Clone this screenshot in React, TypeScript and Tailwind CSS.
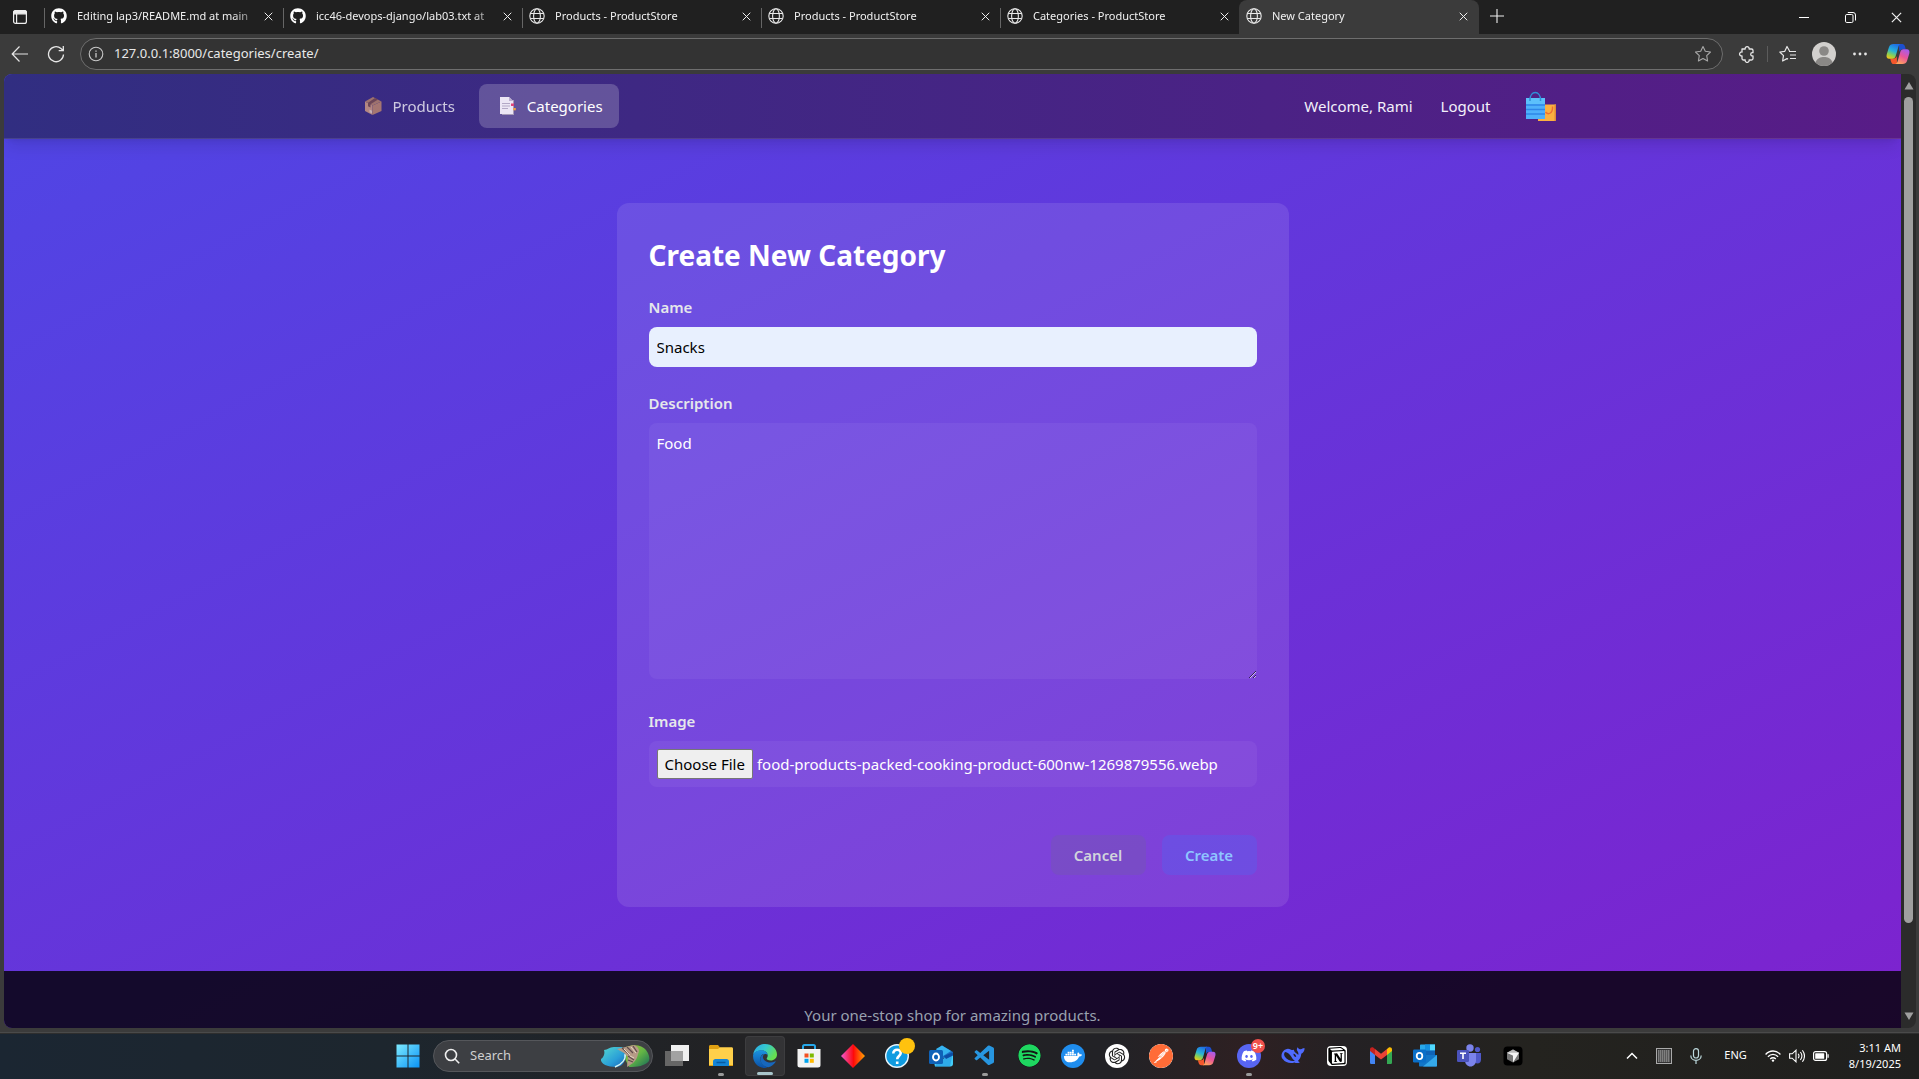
import { useEffect, useRef, type ReactNode } from "react";
import { FaDiscord, FaDocker, FaGithub, FaSpotify } from "react-icons/fa";
import { RiOpenaiFill } from "react-icons/ri";
import { SiNotion, SiPostman } from "react-icons/si";
import { VscVscode } from "react-icons/vsc";

const Globe = () => (
  <svg viewBox="0 0 16 16" className="size-4" fill="none" stroke="#e8e8e8" strokeWidth="1.1">
    <circle cx="8" cy="8" r="7.2" />
    <ellipse cx="8" cy="8" rx="3.4" ry="7.2" />
    <path d="M1.4 5.5h13.2M1.4 10.5h13.2" />
  </svg>
);

const Cross = ({ className }: { className: string }) => (
  <svg viewBox="0 0 10 10" className={className} fill="none" stroke="currentColor" strokeWidth="1.1">
    <path d="M.8.8l8.4 8.4M9.2.8L.8 9.2" />
  </svg>
);

const Copilot = ({ id, className }: { id: string; className: string }) => (
  <svg viewBox="0 0 24 24" className={className}>
    <defs>
      <linearGradient id={id + "a"} x1="0.6" y1="0" x2="0.2" y2="1">
        <stop offset="0" stopColor="#1f6fe5" />
        <stop offset="0.45" stopColor="#27b3d8" />
        <stop offset="0.75" stopColor="#8fd14f" />
        <stop offset="1" stopColor="#f5c518" />
      </linearGradient>
      <linearGradient id={id + "b"} x1="0.8" y1="0" x2="0.3" y2="1">
        <stop offset="0" stopColor="#a45cf0" />
        <stop offset="0.5" stopColor="#e9549a" />
        <stop offset="1" stopColor="#ffa45c" />
      </linearGradient>
    </defs>
    <path d="M13 2h3.2c1.5 0 2.3 1 2.8 2.6l.8 2.9h-3.6c-1.7 0-2.5.9-3 2.5L13 2z" fill="#1c4fd0" />
    <path d="M11 22H7.8c-1.500 0-2.300-1-2.800-2.600L4.200 16.500h3.600c1.700 0 2.500-.9 3-2.500L11 22z" fill="#f4572c" />
    <path d="M7.500 2h7.200c-1.300.3-1.900 1.300-2.300 2.700L9.700 14c-.5 1.700-1.500 2.700-3.200 2.700H3.200C1 16.700 0 14.900.7 12.400L3 4.900C3.600 3 5.200 2 7.500 2z" fill={"url(#" + id + "a)"} />
    <path d="M16.500 22H9.300c1.300-.3 1.900-1.300 2.300-2.700L14.300 10c.5-1.700 1.500-2.700 3.200-2.700h3.300c2.200 0 3.200 1.800 2.500 4.300L21 19.100c-.6 1.900-2.200 2.900-4.500 2.900z" fill={"url(#" + id + "b)"} />
  </svg>
);

const GithubMark = () => <FaGithub className="size-4 text-white" />;

type Tab = { title: string; icon: ReactNode; active?: boolean };
const tabs: Tab[] = [
  { title: "Editing lap3/README.md at main", icon: <GithubMark /> },
  { title: "icc46-devops-django/lab03.txt at", icon: <GithubMark /> },
  { title: "Products - ProductStore", icon: <Globe /> },
  { title: "Products - ProductStore", icon: <Globe /> },
  { title: "Categories - ProductStore", icon: <Globe /> },
  { title: "New Category", icon: <Globe />, active: true },
];

function TabStrip() {
  return (
    <div className="flex h-[34px] shrink-0 items-stretch bg-[#202020] text-[#f0f0f0]">
      <button aria-label="Tab actions" className="flex w-11 shrink-0 items-center pl-3">
        <svg viewBox="0 0 16 16" className="size-4" fill="none" stroke="#eee" strokeWidth="1.200">
          <rect x="1.600" y="1.600" width="12.800" height="12.800" rx="2" />
          <path d="M1.600 3.600a2 2 0 0 1 2-2h8.800a2 2 0 0 1 2 2v1.200H1.600z" fill="#eee" />
          <path d="M4.600 5v9" />
        </svg>
      </button>
      {tabs.map((tab, i) => (
        <div
          key={i}
          className={
            tab.active
              ? "relative flex w-60 shrink items-center gap-2.5 rounded-t-lg bg-[#3b3b3b] pr-1.5 pb-0.5 pl-[7px]"
              : "relative flex w-[239px] shrink items-center gap-2.5 pr-[5px] pb-0.5 pl-[7px] before:absolute before:top-2 before:left-0 before:h-5 before:w-px before:bg-[#666]"
          }
        >
          <span className="shrink-0">{tab.icon}</span>
          <span className="min-w-0 flex-1 overflow-hidden text-[11px] whitespace-nowrap [mask-image:linear-gradient(to_right,#000_88%,rgb(0_0_0/0.3))]">
            {tab.title}
          </span>
          <button aria-label="Close tab" className="-ml-1.5 flex size-5 shrink-0 items-center justify-center">
            <Cross className="size-[9px]" />
          </button>
        </div>
      ))}
      <button aria-label="New tab" className="flex w-[35px] items-center justify-center pb-0.5">
        <svg viewBox="0 0 14 14" className="size-3.5" stroke="#eee" strokeWidth="1.100">
          <path d="M7 0v14M0 7h14" />
        </svg>
      </button>
      <div className="ml-auto flex">
        <button aria-label="Minimize" className="flex w-[46px] items-center justify-center">
          <svg viewBox="0 0 10 10" className="size-2.5" stroke="#fff"><path d="M0 5.500h10" /></svg>
        </button>
        <button aria-label="Restore" className="flex w-[46px] items-center justify-center">
          <svg viewBox="0 0 11 11" className="size-[11px]" fill="none" stroke="#fff">
            <rect x=".5" y="2.500" width="7.500" height="8" rx="1.300" />
            <path d="M2.800.5h5.200a2.500 2.500 0 0 1 2.500 2.500v5.500" />
          </svg>
        </button>
        <button aria-label="Close" className="flex w-[46px] items-center justify-center">
          <Cross className="size-[11px]" />
        </button>
      </div>
    </div>
  );
}

function Toolbar() {
  return (
    <div className="flex h-10 shrink-0 items-center bg-[#3b3b3b] text-[#e6e6e6]">
      <button aria-label="Back" className="flex w-10 items-center justify-center">
        <svg viewBox="0 0 18 18" className="size-[18px]" fill="none" stroke="currentColor" strokeWidth="1.200">
          <path d="M17 9H1.500M8.500 1.500L1.200 9l7.300 7.500" />
        </svg>
      </button>
      <button aria-label="Refresh" className="flex w-8 items-center justify-center">
        <svg viewBox="0 0 18 18" className="size-[18px]" fill="none" stroke="currentColor" strokeWidth="1.300">
          <path d="M16.500 9.500A7.500 7.500 0 1 1 14 3.600l2 1.900M16.300 1v4.700h-4.600" />
        </svg>
      </button>
      <div className="ml-2 flex h-8 flex-1 items-center rounded-full border border-[#6e6e6e] bg-[#333] pr-2.5 pl-[7px]">
        <svg viewBox="0 0 16 16" className="size-4 shrink-0" fill="none" stroke="#c8c8c8" strokeWidth="1.100">
          <circle cx="8" cy="8" r="6.800" />
          <path d="M8 7v4.500M8 4.500v1.300" strokeWidth="1.300" />
        </svg>
        <input
          aria-label="Address"
          defaultValue="127.0.0.1:8000/categories/create/"
          className="ml-2.5 min-w-0 flex-1 bg-transparent text-[13px] text-[#e8e8e8] outline-none"
        />
        <svg viewBox="0 0 18 18" className="size-[18px] shrink-0" fill="none" stroke="#a8a8a8" strokeWidth="1.100" strokeLinejoin="round">
          <path d="M9 1.500l2.300 4.800 5.200.7-3.800 3.700.9 5.300L9 13.500 4.400 16l.9-5.300L1.500 7l5.200-.7z" />
        </svg>
      </div>
      <button aria-label="Extensions" className="ml-3.5 flex w-5 items-center justify-center">
        <svg viewBox="0 0 18 18" className="size-[18px]" fill="none" stroke="currentColor" strokeWidth="1.300" strokeLinejoin="round">
          <path d="M4 4h3.200a2 2 0 1 1 3.900 0h2.400a1.500 1.500 0 0 1 1.500 1.500v2.200h-.7a1.600 1.600 0 0 0 0 3.200h.7v2.600a1.500 1.500 0 0 1-1.500 1.500h-2.400a2 2 0 1 1-3.900 0H5.500A1.500 1.500 0 0 1 4 13.500v-2.600a2 2 0 1 1 0-3.900z" />
        </svg>
      </button>
      <span className="mx-2.5 h-4 w-px bg-[#5c5c5c]" />
      <button aria-label="Favorites" className="flex w-5 items-center justify-center">
        <svg viewBox="0 0 18 18" className="size-[18px]" fill="none" stroke="currentColor" strokeWidth="1.200" strokeLinejoin="round">
          <path d="M10.500 6L8 1.500 5.800 6.300.8 7l3.700 3.700-.9 5.300L8 13.600l1 .5M10 6.500h7M11 10h6M11 13.500h6" />
        </svg>
      </button>
      <button aria-label="Profile" className="ml-3.5 size-6 overflow-hidden rounded-full">
        <svg viewBox="0 0 24 24">
          <rect width="24" height="24" fill="#d2d0ce" />
          <circle cx="12" cy="9" r="4.800" fill="#8a8886" />
          <path d="M3.500 20c2-4 5-5 8.500-5s6.500 1 8.500 5v4h-17z" fill="#8a8886" />
        </svg>
      </button>
      <button aria-label="Settings and more" className="ml-1 flex w-10 items-center justify-center">
        <svg viewBox="0 0 14 4" className="h-1 w-3.5" fill="currentColor">
          <circle cx="1.500" cy="2" r="1.400" /><circle cx="7" cy="2" r="1.400" /><circle cx="12.500" cy="2" r="1.400" />
        </svg>
      </button>
      <button aria-label="Copilot" className="mr-[9px] ml-1.5">
        <Copilot id="tb" className="size-6" />
      </button>
    </div>
  );
}

const PackageIcon = () => (
  <svg viewBox="0 0 24 24" className="size-6">
    <path d="M4 7.500l7.500 4V21L4 17z" fill="#dda582" />
    <path d="M11.500 11.500l9-4v9.500l-9 4z" fill="#c98f6c" />
    <path d="M4 7.500L12 3l8.500 4.500-9 4z" fill="#c08a68" />
    <path d="M14 4l3 1.600-7.500 4.600v3.300l-2.500-1.300V8.800z" fill="#7d4f4a" />
    <path d="M8.500 15.500l2.500 1.300v2.700l-2.500-1.300z" fill="#f3dcc8" />
  </svg>
);

const PagesIcon = () => (
  <svg viewBox="0 0 24 24" className="size-6">
    <path d="M7 6h12v15H7z" fill="#a79bb8" />
    <path d="M5 3h9l4 4v13H5z" fill="#ece6f5" />
    <path d="M14 3l4 4h-4z" fill="#bcaed0" />
    <path d="M7 9.500h8M7 12h8M7 14.500h6" stroke="#b3a8c6" />
    <rect x="16" y="9.500" width="3" height="2.500" fill="#e0447a" />
    <rect x="18.300" y="14" width="2.500" height="2.300" fill="#f0a040" />
  </svg>
);

const BagsIcon = () => (
  <svg viewBox="0 0 32 32" className="size-8">
    <path d="M13 14.500h18V31H13z" fill="#fbb040" />
    <path d="M29.500 14.500H31V31h-1.500z" fill="#e08a3a" />
    <path d="M20.500 22c3 3.500 7.500 1 7-5.500" fill="none" stroke="#ee6f35" strokeWidth="1.400" />
    <path d="M5 10C5 0 15.500 0 15.500 10" fill="none" stroke="#2f8fd8" strokeWidth="1.500" />
    <path d="M1 8h19v21H1z" fill="#4fb0fa" />
    <path d="M1 8h19v6H1z" fill="#5cc0fb" />
    <path d="M1 15h19M1 19.500h19M1 24h19" stroke="#2f86e8" strokeWidth="1.500" />
    <path d="M5 8v3M15.500 8v3" stroke="#2f8fd8" strokeWidth="1.500" />
  </svg>
);

function SiteHeader() {
  return (
    <header className="border-b border-white/10 bg-[linear-gradient(to_right,#312e81,#581c87)] shadow-lg">
      <div className="mx-auto flex h-16 max-w-7xl items-center justify-between px-8">
        <nav className="flex items-center gap-2">
          <a href="#products" className="flex h-11 items-center gap-2 rounded-lg px-4 text-white opacity-75">
            <PackageIcon />Products
          </a>
          <a href="#categories" className="flex h-11 items-center gap-2 rounded-lg bg-white/20 px-4 text-white">
            <PagesIcon />Categories
          </a>
        </nav>
        <div className="flex items-center text-[#f3f0fa]">
          <span>Welcome, Rami</span>
          <a href="#logout" className="ml-7">Logout</a>
          <a href="#home" aria-label="ProductStore" className="mr-1 ml-[34px]"><BagsIcon /></a>
        </div>
      </div>
    </header>
  );
}

function CategoryForm() {
  const fileRef = useRef<HTMLInputElement>(null);
  useEffect(() => {
    const data = new DataTransfer();
    data.items.add(new File([""], "food-products-packed-cooking-product-600nw-1269879556.webp"));
    if (fileRef.current) fileRef.current.files = data.files;
  }, []);

  return (
    <form onSubmit={(e) => e.preventDefault()} className="mx-auto max-w-2xl rounded-xl bg-white/10 p-8">
      <h1 className="mb-[22px] pt-0.5 text-[28px] leading-9 font-bold text-white">Create New Category</h1>
      <label htmlFor="name" className="mb-2 block font-semibold text-gray-200">Name</label>
      <input id="name" defaultValue="Snacks" className="block h-10 w-full rounded-lg bg-[#e8f0fe] px-2 text-black" />
      <label htmlFor="description" className="mt-6 mb-2 block font-semibold text-gray-200">Description</label>
      <textarea id="description" defaultValue="Food" className="block h-64 w-full rounded-lg bg-white/5 p-2 text-white" />
      <label htmlFor="image" className="mt-[30px] mb-2 block font-semibold text-gray-200">Image</label>
      <input
        ref={fileRef}
        id="image"
        type="file"
        className="block h-[46px] w-full rounded-lg bg-white/5 p-2 text-white file:mr-1 file:h-[30px] file:rounded-xs file:border file:border-solid file:border-[#767676] file:bg-[#efefef] file:px-[7px] file:text-black"
      />
      <div className="mt-12 flex justify-end gap-4">
        <button type="button" className="h-10 w-[95px] rounded-lg bg-gray-500/20 font-semibold text-gray-300">Cancel</button>
        <button type="submit" className="h-10 w-[95px] rounded-lg bg-blue-500/20 font-semibold text-[#8ec5ff]">Create</button>
      </div>
    </form>
  );
}

function Viewport() {
  return (
    <div className="flex min-h-0 flex-1 bg-[#3b3b3b] pr-[3px] pl-1">
      <div className="min-w-0 flex-1 overflow-hidden rounded-tl-lg rounded-bl-lg">
        <div className="bg-[linear-gradient(to_bottom_right,#4f46e5,#7e22ce)] font-['Noto_Sans','Open_Sans',sans-serif] text-[15px] leading-6">
          <SiteHeader />
          <main className="py-16"><CategoryForm /></main>
          <footer className="bg-black/80 py-8 text-center text-gray-400"><p>Your one-stop shop for amazing products.</p></footer>
        </div>
      </div>
      <div className="flex w-[15px] flex-col items-center rounded-r-lg bg-[#2b2b2b] py-2">
        <svg viewBox="0 0 10 8" className="h-2 w-2.5" fill="#9f9f9f"><path d="M5 0l4.500 7.500h-9z" /></svg>
        <div className="my-[7px] w-full flex-1">
          <div className="mx-auto h-[91%] w-[9px] rounded-full bg-[#9f9f9f]" />
        </div>
        <svg viewBox="0 0 10 8" className="h-2 w-2.5" fill="#9f9f9f"><path d="M5 8L.5 .5h9z" /></svg>
      </div>
    </div>
  );
}

const StartIcon = () => (
  <svg viewBox="0 0 24 24" className="size-6">
    <defs><linearGradient id="win" x1="0" y1="0" x2="1" y2="1"><stop stopColor="#7deaff" /><stop offset="1" stopColor="#0a93f5" /></linearGradient></defs>
    <path d="M.5.5h11v11H.5zM12.500.5h11v11h-11zM.5 12.500h11v11H.5zM12.500 12.500h11v11h-11z" fill="url(#win)" />
  </svg>
);
const SearchArt = () => (
  <svg viewBox="0 0 50 24" className="h-6 w-[50px]">
    <defs>
      <linearGradient id="sea" x1="0" y1="0" x2="1" y2="1"><stop stopColor="#55d9cf" /><stop offset="0.600" stopColor="#2a9fd8" /><stop offset="1" stopColor="#1a62b4" /></linearGradient>
      <linearGradient id="land" x1="0" y1="0" x2="1" y2="1"><stop stopColor="#a9c23a" /><stop offset="0.500" stopColor="#63b545" /><stop offset="1" stopColor="#176b58" /></linearGradient>
    </defs>
    <path d="M26 3c8-3 16-2 20 3 3 4 4 8 3 11-4 5-12 6-20 6l-4-8z" fill="url(#land)" />
    <path d="M4 6c4 0 5-3 10-3h8c4 3 5 8 3 13-2 5-5 7-9 7C8 23 0 20 1 15c3-2 4-6 3-9z" fill="url(#sea)" />
    <path d="M15 23c7-3 11-8 10-13" stroke="#d9f5f2" strokeWidth="1.500" fill="none" />
    <path d="M17 5l17-4c5 2 6 6 4 9-1 5-3 7-5 9l-6 4 1-10-4-4z" fill="#b59a86" />
    <path d="M22 4l7 6M27 3l6 6M33 2l4 6M28 12l6 4M28 16l5 2" stroke="#5e4a4c" strokeWidth="1.200" />
    <path d="M24 5l6 6M31 3l5 6M30 12l4 2" stroke="#e6d6c4" />
  </svg>
);
const TaskViewIcon = () => (
  <svg viewBox="0 0 24 24" className="size-6">
    <rect x="6" y="1" width="18" height="16" fill="#f0f0f0" />
    <rect y="7" width="18" height="15" fill="#666" /><path d="M6 7h12v10H6z" fill="#a2a2a2" />
  </svg>
);
const FolderIcon = () => (
  <svg viewBox="0 0 24 24" className="size-6">
    <path d="M0 2.500C0 1.500.7 1 1.500 1H9l2 2.500V6H0z" fill="#e0a012" />
    <path d="M0 5h9l2-1.800h11.500c1 0 1.500.6 1.500 1.500V22H0z" fill="#ffd04a" />
    <path d="M0 21h24v1H0z" fill="#e0a012" />
    <path d="M4 22v-4.500c0-1.300 1-2.500 2.500-2.500h11c1.500 0 2.500 1.200 2.500 2.500V22z" fill="#1484d6" />
    <path d="M7.500 18.500h9" stroke="#075aa2" strokeWidth="1.500" />
  </svg>
);
const EdgeIcon = () => (
  <svg viewBox="0 0 24 24" className="size-6">
    <defs>
      <linearGradient id="eg1" x1="0" y1="0" x2="1" y2="0.500"><stop stopColor="#2aa6ea" /><stop offset="0.500" stopColor="#35c9cf" /><stop offset="1" stopColor="#66e04f" /></linearGradient>
      <linearGradient id="eg2" x1="0" y1="0" x2="0" y2="1"><stop stopColor="#1b93e0" /><stop offset="1" stopColor="#0b4fa5" /></linearGradient>
    </defs>
    <path d="M.1 11C1 4.500 6 0 12 0c7 0 12 4.900 12 10.500 0 3.500-2.800 6-6.300 6-3 0-4-1.200-4-2 0-.6 1-1.200 1-3C14.700 9 12.500 6.500 9 6.500 4.500 6.500 1 8.500.1 11z" fill="url(#eg1)" />
    <path d="M.1 11c1-3 4.300-4.700 8.400-4.700 3.500 0 6 2.200 6.200 4.800-.6-.7-1.600-1.100-2.700-1.100-3 0-4.700 2.300-4.700 5 0 4.200 3.700 6.800 7 8.600-1 .3-1.600.4-2.300.4C5 24-.5 18.500.1 11z" fill="url(#eg2)" />
    <path d="M12 10c-2.900.2-4.700 2.300-4.700 5 0 5 4.500 8 8.200 8.300 3-.9 5.400-2.800 7-5.400.3-.5-.1-.8-.6-.5-6 2.700-12-.5-12-4.500 0-1.300.8-2.400 2.100-2.900z" fill="#1767bd" />
  </svg>
);
const StoreIcon = () => (
  <svg viewBox="0 0 24 24" className="size-6">
    <path d="M6 6V2.500C6 1.500 6.500 1 7.500 1h9c1 0 1.500.5 1.500 1.500V6" fill="none" stroke="#26a8ea" strokeWidth="2" />
    <path d="M.5 5h23v16c0 1.800-1 2.500-2.500 2.500H3C1.500 23.500.5 22.800.5 21z" fill="#f3f3f3" />
    <path d="M7.500 9.500h4v4h-4z" fill="#f25022" /><path d="M12.800 9.500h4v4h-4z" fill="#7fba00" /><path d="M7.500 14.800h4v4h-4z" fill="#00a4ef" /><path d="M12.800 14.800h4v4h-4z" fill="#ffb900" />
  </svg>
);
const DiamondIcon = () => (
  <svg viewBox="0 0 24 24" className="size-6">
    <defs><linearGradient id="dia"><stop stopColor="#f05ad0" /><stop offset="0.480" stopColor="#fa1020" /><stop offset="0.520" stopColor="#ff0a0a" /><stop offset="1" stopColor="#ffa400" /></linearGradient></defs>
    <path d="M12 0l12 12-12 12L0 12z" fill="url(#dia)" />
  </svg>
);
const HelpIcon = () => (
  <svg viewBox="0 0 24 24" className="size-6">
    <circle cx="12" cy="12" r="11.300" fill="#0f9be0" stroke="#e8f5fc" strokeWidth="1.400" />
    <path d="M8.300 9.500c-.2-5 7.700-5 7.400-.3-.2 2.800-3.500 2.900-3.500 6M12.200 17.500v2.500" fill="none" stroke="#fff" strokeWidth="2.600" />
  </svg>
);
const MailIcon = () => (
  <svg viewBox="0 0 24 24" className="size-6">
    <path d="M4 8l9-6.500L24 8v6H4z" fill="#1a6fc4" />
    <path d="M7 5l6-3.500L22 7l-8 5z" fill="#36b4f0" />
    <path d="M24 8v12c0 1.500-1 2.500-2.500 2.500H6L4 14l10 1z" fill="#43cdf7" />
    <path d="M24 8L8 19l-2 3.500h15z" fill="#1e90e0" opacity=".55" />
    <path d="M24 8v3.500l-7 3.500-2-3z" fill="#0c4ea6" />
    <rect y="6" width="14" height="14" rx="1.500" fill="#0f62b8" />
    <ellipse cx="7" cy="13" rx="3" ry="3.500" fill="none" stroke="#fff" strokeWidth="1.900" />
  </svg>
);
const OutlookIcon = () => (
  <svg viewBox="0 0 24 24" className="size-6">
    <path d="M7 1.500C7 .8 7.500.5 8 .5h14v12H7z" fill="#28a8ea" />
    <path d="M12 .5h5v6h-5z" fill="#1490df" /><path d="M17 .5h5v6h-5z" fill="#50d9ff" /><path d="M12 6.500h10v6H12z" fill="#0f64b8" />
    <path d="M6 11h18v10.500c0 .6-.4 1-1 1H7c-.6 0-1-.4-1-1z" fill="#1276c8" />
    <path d="M24 11L10 22.500h13c.6 0 1-.4 1-1z" fill="#35a9ea" />
    <rect y="5.500" width="13" height="13" rx="1.200" fill="#0a6fc8" />
    <ellipse cx="6.500" cy="12" rx="2.800" ry="3.100" fill="none" stroke="#fff" strokeWidth="1.800" />
  </svg>
);
const DeepSeekIcon = () => (
  <svg viewBox="0 0 24 24" className="size-6">
    <path d="M.5 12C.5 8 3.500 5 7 4.800c1.800 0 2.500 1 4 1.200.8 0 1-.4 1.600-.2.5.3.3 1 1 1.900 1.300 1.600 2.900 2.300 3.700 3.200.3-1.700 0-2.500-.9-3.800-1-1.300-.6-3 .4-3.900.5 1.500 1.600 2 2.900 2 1.500-.1 2-.9 3.800-1.100.3 2.300-.8 4.800-3.200 5.600-.3 3.300-1.600 5.500-3.400 7.300l2 1.200c-2 1.300-4 .9-5.500.2-3.900 1.500-9 .2-11.400-3.200C.9 14.200.5 13.200.5 12z" fill="#4f6bfe" />
    <path d="M4 8c2.800.3 4.500 2 6.500 5 1 1.700 1.800 2.800 3.500 3.800-4 .6-8.500-1.200-10.400-4.600C2.800 10.800 3 9 4 8z" fill="#242124" />
    <path d="M12.300 9.800c1.800.2 2.800 1.600 2.900 3.300-1.500 0-2.700-1.300-2.900-3.300z" fill="#242124" />
  </svg>
);
const GmailIcon = () => (
  <svg viewBox="0 0 24 24" className="size-6">
    <path d="M1 5.500l5 4V20H2.500C1.700 20 1 19.500 1 18.500z" fill="#4285f4" />
    <path d="M23 5.500l-5 4V20h3.500c.8 0 1.500-.5 1.500-1.500z" fill="#34a853" />
    <path d="M18 5l1.500-1.200C21 2.700 23 3.700 23 5.500V7l-5 4z" fill="#fbbc04" />
    <path d="M6 5L4.500 3.800C3 2.700 1 3.700 1 5.500V7l5 4z" fill="#c5221f" />
    <path d="M6 5l6 4.700L18 5v6l-6 4.600L6 11z" fill="#ea4335" />
  </svg>
);
const TeamsIcon = () => (
  <svg viewBox="0 0 24 24" className="size-6">
    <circle cx="20.500" cy="5.500" r="2.600" fill="#5059c9" /><circle cx="13" cy="4" r="3.700" fill="#7b83eb" />
    <path d="M17 9h7v6.500c0 2.500-1.500 4-3.500 4S17 18 17 15.500z" fill="#5059c9" />
    <path d="M8 9h11v7.500c0 3.500-2.500 6-5.500 6S8 20 8 16.500z" fill="#7b83eb" />
    <rect y="6" width="12" height="12" rx="1.200" fill="#4b53bc" />
    <path d="M3 9.200h6M6 9.200V15" stroke="#fff" strokeWidth="1.600" />
  </svg>
);
const CursorIcon = () => (
  <svg viewBox="0 0 24 24" className="size-6">
    <rect x="2.500" y="2.500" width="19" height="19" rx="4" fill="#000" />
    <path d="M12 5.500l6 3.200v6.600l-6 3.200-6-3.200V8.700z" fill="#777" />
    <path d="M6 8.700L12 5.500l6 3.200-6 2.800z" fill="#bbb" /><path d="M6 8.700h12l-6 9.800v-7z" fill="#f5f5f5" />
  </svg>
);

type App = { name: string; icon: ReactNode; state?: "active" | "running"; badge?: ReactNode };
const apps: App[] = [
  { name: "Task View", icon: <TaskViewIcon /> },
  { name: "File Explorer", icon: <FolderIcon />, state: "running" },
  { name: "Edge", icon: <EdgeIcon />, state: "active" },
  { name: "Store", icon: <StoreIcon /> },
  { name: "Diamond", icon: <DiamondIcon /> },
  { name: "Help", icon: <HelpIcon />, badge: <span className="absolute top-0.5 right-1 size-4 rounded-full bg-[#ffc20e]" /> },
  { name: "Mail", icon: <MailIcon /> },
  { name: "VS Code", icon: <VscVscode className="size-6 text-[#2796e0]" />, state: "running" },
  { name: "Spotify", icon: <FaSpotify className="size-[23px] rounded-full bg-[#141414] text-[#1ed760]" /> },
  { name: "Docker", icon: <span className="flex size-6 items-center justify-center rounded-full bg-[#1f8ded]"><FaDocker className="size-[18px] text-white" /></span> },
  { name: "ChatGPT", icon: <span className="flex size-6 items-center justify-center rounded-full bg-white"><RiOpenaiFill className="size-5 text-[#222]" /></span> },
  { name: "Postman", icon: <SiPostman className="size-6 rounded-full bg-white text-[#ff6c37]" /> },
  { name: "Copilot", icon: <Copilot id="dk" className="size-[22px]" /> },
  {
    name: "Discord",
    icon: <span className="flex size-6 items-center justify-center rounded-full bg-[#5865f2]"><FaDiscord className="size-4 text-white" /></span>,
    state: "running",
    badge: <span className="absolute top-[3px] right-1.5 flex size-3.5 items-center justify-center rounded-full bg-[#f0504c] text-[9px] font-semibold text-white">9+</span>,
  },
  { name: "DeepSeek", icon: <DeepSeekIcon /> },
  { name: "Notion", icon: <span className="rounded-sm bg-white p-px"><SiNotion className="size-[18px] text-black" /></span> },
  { name: "Gmail", icon: <GmailIcon /> },
  { name: "Outlook", icon: <OutlookIcon /> },
  { name: "Teams", icon: <TeamsIcon /> },
  { name: "Cursor", icon: <CursorIcon /> },
];

function Taskbar() {
  return (
    <div className="grid h-[46px] shrink-0 grid-cols-[1fr_auto_1fr] items-center border-t border-[#2e2e2e] bg-[linear-gradient(to_right,#1b2632_0%,#1d262e_20%,#222224_38%,#222226_58%,#2e2022_65%,#242124_70%,#24231f_80%,#1f1f1e_100%)] text-white">
      <div />
      <div className="flex h-full items-center pb-0.5 pl-0.5">
        <button aria-label="Start" className="mr-[3px] flex w-11 items-center justify-center"><StartIcon /></button>
        <label className="mr-0.5 flex h-8 w-[220px] items-center rounded-full border border-[#55575b] bg-[#3d3f43] pr-0.5 pl-2.5">
          <svg viewBox="0 0 16 16" className="size-4 shrink-0" fill="none" stroke="#eee" strokeWidth="1.600"><circle cx="7" cy="7" r="5.500" /><path d="M11 11l4.200 4.200" /></svg>
          <input aria-label="Search" placeholder="Search" className="ml-2.5 min-w-0 flex-1 bg-transparent text-[13px] placeholder:text-[#cfcfcf]" />
          <SearchArt />
        </label>
        {apps.map((app) => (
          <button
            key={app.name}
            aria-label={app.name}
            className={
              app.state === "active"
                ? "relative mx-0.5 flex h-10 w-10 items-center justify-center rounded-sm border border-white/5 bg-white/8"
                : "relative flex h-10 w-11 items-center justify-center"
            }
          >
            {app.icon}
            {app.badge}
            {app.state === "active" && <span className="absolute bottom-0 h-[3px] w-4 rounded-full bg-[#a9c6cc]" />}
            {app.state === "running" && <span className="absolute bottom-0 h-[3px] w-1.5 rounded-full bg-[#9a9a9a]" />}
          </button>
        ))}
      </div>
      <div className="flex items-center justify-end pr-[18px] pb-0.5">
        <svg viewBox="0 0 12 8" className="mr-[18px] h-2 w-3" fill="none" stroke="#fff" strokeWidth="1.500"><path d="M1 6.500l5-5 5 5" /></svg>
        <svg viewBox="0 0 16 16" className="mr-[18px] size-4">
          <rect x=".5" y=".5" width="15" height="15" fill="#333" stroke="#aaa" />
          <path d="M2 3h12M2 5h12M2 7h12M2 9h12M2 11h12M2 13h12" stroke="#ccc" strokeDasharray="1.500 .5" />
        </svg>
        <svg viewBox="0 0 12 16" className="mr-[22px] h-4 w-3" fill="none" stroke="#bcd8dc" strokeWidth="1.200">
          <rect x="3.500" y=".6" width="5" height="9.400" rx="2.500" /><path d="M.8 7.500c0 6.500 10.400 6.500 10.400 0M6 12.500V16" />
        </svg>
        <span className="mr-[18px] text-[11px]">ENG</span>
        <svg viewBox="0 0 16 12" className="mr-2 h-3 w-4" fill="none" stroke="#fff" strokeWidth="1.300">
          <path d="M.6 4.500c4.200-4.700 10.600-4.700 14.800 0M2.900 6.800c3-3.200 7.200-3.200 10.200 0M5.200 9c1.700-1.700 3.900-1.700 5.600 0" /><circle cx="8" cy="10.600" r="1.200" fill="#fff" stroke="none" />
        </svg>
        <svg viewBox="0 0 16 14" className="mr-2 h-3.5 w-4" fill="none" stroke="#fff" strokeWidth="1.100">
          <path d="M.6 4.800h2.600L7 1.200v11.600L3.200 9.200H.6zM9.200 4.800c1 1.400 1 3 0 4.400M11.400 3c1.900 2.500 1.900 5.500 0 8M13.400 1.200c2.600 3.600 2.600 8 0 11.600" />
        </svg>
        <svg viewBox="0 0 16 10" className="mr-5 h-2.5 w-4">
          <rect x=".6" y=".6" width="13" height="8.800" rx="2" fill="none" stroke="#fff" strokeWidth="1.200" /><rect x="2.200" y="2.200" width="9" height="5.600" rx=".6" fill="#fff" /><path d="M14.500 3.300h1.200v3.400h-1.200z" fill="#fff" />
        </svg>
        <div className="text-right text-[11px] leading-4"><div>3:11 AM</div><div>8/19/2025</div></div>
      </div>
    </div>
  );
}

export default function App() {
  return (
    <div className="flex h-screen flex-col overflow-hidden bg-[#3b3b3b] font-['Noto_Sans','Open_Sans',sans-serif]">
      <TabStrip />
      <Toolbar />
      <Viewport />
      <div className="h-[5px] shrink-0 border-b border-[#4a4a4a] bg-[#3b3b3b]" />
      <Taskbar />
    </div>
  );
}
